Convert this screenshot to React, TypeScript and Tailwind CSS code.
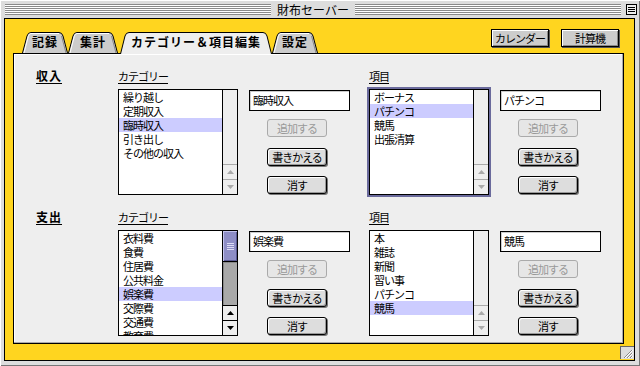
import React from "react";

type TriProps = { up?: boolean; color: string };
const Tri = ({ up, color }: TriProps) => (
  <svg width="7" height="4" viewBox="0 0 7 4">
    <path d={up ? "M3.5 0 L7 4 L0 4 Z" : "M0 0 L7 0 L3.5 4 Z"} fill={color} />
  </svg>
);

function ScrollInactive() {
  return (
    <div className="w-[15px] h-full border-l border-black bg-[#eeeeee] flex flex-col justify-end">
      <div className="h-[15px] border-t border-[#aaaaaa] flex items-center justify-center">
        <Tri up color="#aaaaaa" />
      </div>
      <div className="h-[15px] border-t border-[#aaaaaa] flex items-center justify-center">
        <Tri color="#aaaaaa" />
      </div>
    </div>
  );
}

function ScrollActive() {
  return (
    <div className="w-[15px] h-full border-l border-black bg-[#a9a9a9] flex flex-col">
      <div className="h-[31px] bg-[#8e8ec6] border-b border-black shadow-[inset_1px_1px_0_#c4c4ee,inset_-1px_-1px_0_#5c5c94] flex flex-col items-center justify-center gap-[1px]">
        <div className="w-[7px] h-[1px] bg-[#dcdcf4]" />
        <div className="w-[7px] h-[1px] bg-[#dcdcf4]" />
        <div className="w-[7px] h-[1px] bg-[#dcdcf4]" />
        <div className="w-[7px] h-[1px] bg-[#dcdcf4]" />
      </div>
      <div className="flex-1 shadow-[inset_1px_1px_0_#888888]" />
      <div className="h-[15px] border-t border-black bg-[#eeeeee] flex items-center justify-center">
        <Tri up color="#000000" />
      </div>
      <div className="h-[15px] border-t border-black bg-[#eeeeee] flex items-center justify-center">
        <Tri color="#000000" />
      </div>
    </div>
  );
}

type ListProps = { items: string[]; selected: number; focused?: boolean; active?: boolean };
function ListBox({ items, selected, focused, active }: ListProps) {
  return (
    <div
      className={
        focused
          ? "w-[120px] h-[106px] border border-black bg-white flex shadow-[0_0_0_2px_#6a6a9c]"
          : "w-[120px] h-[106px] border border-black bg-white flex"
      }
    >
      <div className="flex-1 overflow-hidden">
        {items.map((t, i) => (
          <div
            key={i}
            className={
              i === selected
                ? "h-[14px] leading-[14px] pl-[4px] bg-[#ccccff] whitespace-nowrap"
                : "h-[14px] leading-[14px] pl-[4px] whitespace-nowrap"
            }
          >
            {t}
          </div>
        ))}
      </div>
      {active ? <ScrollActive /> : <ScrollInactive />}
    </div>
  );
}

type BtnProps = { children: React.ReactNode; disabled?: boolean };
function Btn({ children, disabled }: BtnProps) {
  return (
    <div
      className={
        disabled
          ? "w-[60px] h-[18px] rounded-[3px] border border-[#aaaaaa] bg-[#e6e6e6] text-[#999999] flex items-center justify-center leading-none"
          : "w-[60px] h-[18px] rounded-[3px] border border-black bg-[#dddddd] text-black flex items-center justify-center leading-none shadow-[inset_1px_1px_0_#ffffff,inset_-1px_-1px_0_#999999,1px_1px_0_#777777]"
      }
    >
      {children}
    </div>
  );
}

type GroupProps = {
  label: string;
  items: string[];
  selected: number;
  value: string;
  focused?: boolean;
  active?: boolean;
};
function Group({ label, items, selected, value, focused, active }: GroupProps) {
  return (
    <div className="flex flex-col w-[232px]">
      <div className="h-[19px] leading-[13px]">
        <span className="underline underline-offset-[2px]">{label}</span>
      </div>
      <div className="flex">
        <ListBox items={items} selected={selected} focused={focused} active={active} />
        <div className="ml-[11px] flex flex-col">
          <div className="mt-[1px] w-[101px] h-[21px] border border-black bg-white pl-[3px] leading-[19px] shadow-[inset_1px_1px_0_#cccccc]">
            {value}
          </div>
          <div className="ml-[18px] mt-[8px] flex flex-col">
            <Btn disabled>追加する</Btn>
            <div className="mt-[11px]">
              <Btn>書きかえる</Btn>
            </div>
            <div className="mt-[10px]">
              <Btn>消す</Btn>
            </div>
          </div>
        </div>
      </div>
    </div>
  );
}

type TabProps = { label: string; active?: boolean; width: number };
function Tab({ label, active, width }: TabProps) {
  const h = active ? 22 : 21;
  const d = `M0.5 ${h} L5 4 Q6 0.5 9 0.5 L${width - 9} 0.5 Q${width - 6} 0.5 ${width - 5} 4 L${width - 0.5} ${h}`;
  return (
    <div className="relative" style={{ width, height: h }}>
      <svg className="absolute inset-0" width={width} height={h} viewBox={`0 0 ${width} ${h}`}>
        <path d={d} fill={active ? "#eeeeee" : "#cccccc"} stroke="#000" strokeWidth="1" />
        {!active && (
          <path
            d={`M2 ${h} L6.3 4.3 Q7 1.5 9 1.5 L${width - 9} 1.5`}
            fill="none"
            stroke="#ffffff"
            strokeWidth="1"
          />
        )}
        {!active && (
          <path d={`M${width - 6.5} 4 L${width - 2} ${h}`} fill="none" stroke="#888888" strokeWidth="1" />
        )}
      </svg>
      <div className="relative text-center pt-[3px] text-[12px] leading-[14px] font-bold tracking-[1px]">
        {label}
      </div>
    </div>
  );
}

const stripe =
  "flex-1 h-[11px] bg-[image:repeating-linear-gradient(180deg,#8a8a8a_0px,#8a8a8a_1px,#ffffff_1px,#ffffff_2px)]";

export default function App() {
  return (
    <div className="w-[640px] h-[366px] bg-[#dddddd] flex flex-col relative overflow-hidden font-['Noto_Sans_CJK_JP',sans-serif] text-[11px] tracking-[-1px] text-black shadow-[inset_1px_1px_0_#ffffff,inset_-1px_-1px_0_#777777]">
      {/* title bar */}
      <div className="h-[18px] flex items-start pt-[4px] pl-[5px] pr-[3px] gap-[5px]">
        <div className={stripe} />
        <div className="text-[12px] leading-[11px] tracking-[0px] px-[1px]">財布セーバー</div>
        <div className={stripe} />
        <div className="w-[11px] h-[11px] border border-black bg-[#eeeeee] flex flex-col justify-center gap-[1px] px-[1px]">
          <div className="h-[1px] bg-black" />
          <div className="h-[1px] bg-black" />
          <div className="h-[1px] bg-black" />
        </div>
      </div>

      {/* yellow frame */}
      <div className="flex-1 ml-[4px] mr-[5px] mb-[5px] border border-black bg-[#ffd51f] flex flex-col">
        <div className="h-[34px] flex items-start justify-between pl-[17px] pr-[15px]">
          <div className="self-end flex items-start mb-[-1px] relative z-10">
            <Tab label="記録" width={46} />
            <Tab label="集計" width={50} />
            <div className="ml-[2px]">
              <Tab label="カテゴリー＆項目編集" width={152} active />
            </div>
            <Tab label="設定" width={46} />
          </div>
          <div className="pt-[10px] flex gap-[12px]">
            <div className="w-[58px] h-[18px] border border-black bg-[#cccccc] flex items-center justify-center leading-none shadow-[inset_1px_1px_0_#ffffff,inset_-1px_-1px_0_#888888,1px_1px_0_#555555]">
              カレンダー
            </div>
            <div className="w-[58px] h-[18px] border border-black bg-[#cccccc] flex items-center justify-center leading-none shadow-[inset_1px_1px_0_#ffffff,inset_-1px_-1px_0_#888888,1px_1px_0_#555555]">
              計算機
            </div>
          </div>
        </div>

        {/* panel */}
        <div className="flex-1 ml-[8px] mr-[10px] mb-[16px] border border-black bg-[#eeeeee] shadow-[inset_-1px_-1px_0_#aaaaaa,inset_1px_1px_0_#ffffff] pt-[16px] flex flex-col gap-[16px]">
          <div className="flex">
            <div className="w-[104px] pl-[22px] -mt-[2px]">
              <span className="text-[12px] leading-[13px] font-bold tracking-[1px] underline underline-offset-[2px]">
                収入
              </span>
            </div>
            <Group
              label="カテゴリー"
              items={["繰り越し", "定期収入", "臨時収入", "引き出し", "その他の収入"]}
              selected={2}
              value="臨時収入"
            />
            <div className="w-[19px]" />
            <Group
              label="項目"
              items={["ボーナス", "パチンコ", "競馬", "出張清算"]}
              selected={1}
              value="パチンコ"
              focused
            />
          </div>
          <div className="flex">
            <div className="w-[104px] pl-[22px] -mt-[2px]">
              <span className="text-[12px] leading-[13px] font-bold tracking-[1px] underline underline-offset-[2px]">
                支出
              </span>
            </div>
            <Group
              label="カテゴリー"
              items={["衣料費", "食費", "住居費", "公共料金", "娯楽費", "交際費", "交通費", "教育費"]}
              selected={4}
              value="娯楽費"
              active
            />
            <div className="w-[19px]" />
            <Group
              label="項目"
              items={["本", "雑誌", "新聞", "習い事", "パチンコ", "競馬"]}
              selected={5}
              value="競馬"
            />
          </div>
        </div>
      </div>

      {/* resize grip */}
      <div className="absolute left-[620px] top-[346px] w-[14px] h-[13px] bg-[#dddddd] border-l border-t border-[#666666]">
        <svg width="13" height="12" viewBox="0 0 13 12" className="block">
          <path d="M3 11 L11 3 M6 11 L11 6 M9 11 L11 9" stroke="#888888" strokeWidth="1" />
          <path d="M4 11 L12 3 M7 11 L12 6 M10 11 L12 9" stroke="#ffffff" strokeWidth="1" />
        </svg>
      </div>
    </div>
  );
}
